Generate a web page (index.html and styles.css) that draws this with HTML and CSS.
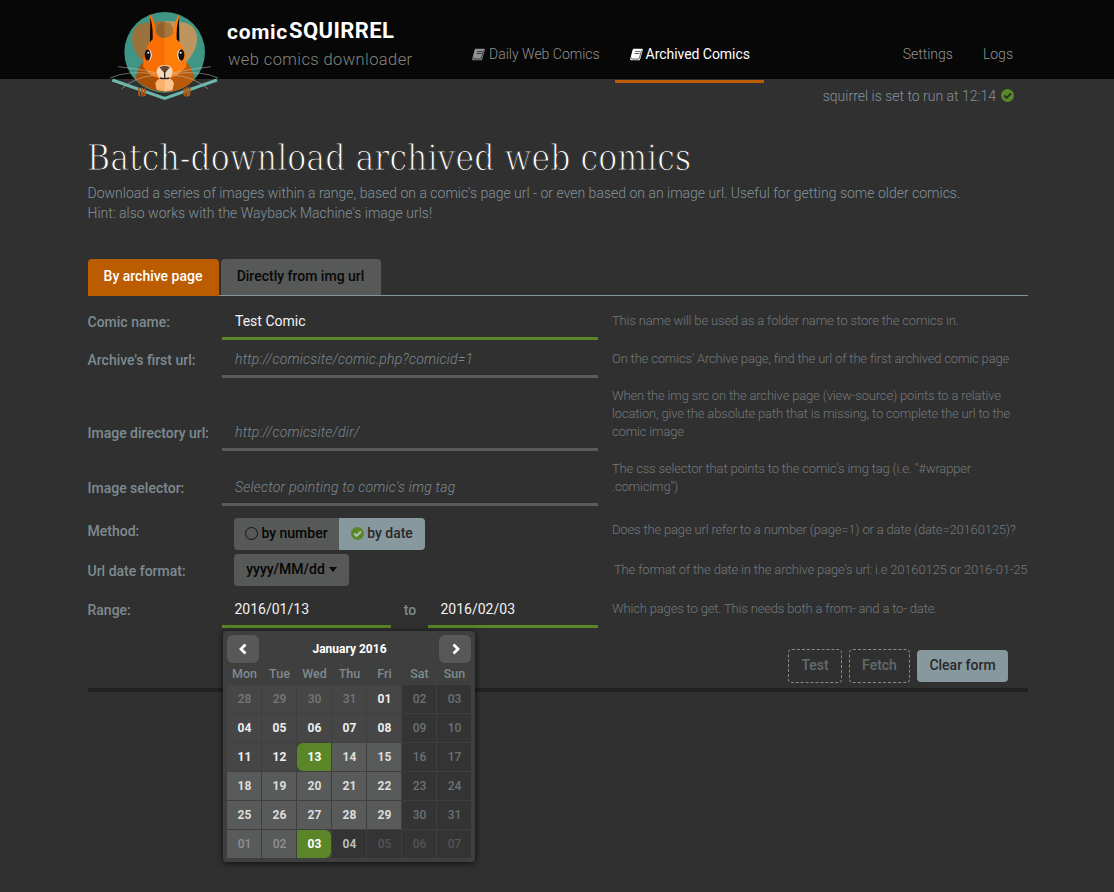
FILE: index.html
```html
<!DOCTYPE html>
<html lang="en">
<head>
<meta charset="utf-8">
<title>comicSQUIRREL</title>
<link rel="stylesheet" href="styles.css">
</head>
<body>
<svg class="defs" width="0" height="0">
  <defs>
    <symbol id="book" viewBox="0 0 40 38">
      <path fill="currentColor" d="M12 1h24c3 0 4 2 3 5l-7 25c-1 4-3 6-6 6H5c-4 0-5-3-4-6L8 5c1-3 2-4 4-4z"/>
      <path class="cut" d="M16 10h15M14 16h15M5 29c-1 3 0 4 3 4h17c2 0 3-1 4-3l6-23"/>
    </symbol>
    <symbol id="check" viewBox="0 0 12 12">
      <circle cx="6" cy="6" r="6" fill="#5b8827"/>
      <path d="M3 6l2.2 2.2L9.2 4.2" fill="none" stroke="currentColor" stroke-width="1.9"/>
    </symbol>
  </defs>
</svg>
<header class="header">
  <svg class="logo" viewBox="0 0 390 330">
    <circle cx="194" cy="157" r="121" fill="#3f9684"/>
    <path d="M194 64c-45-1-80 4-90 22-18 30-3 75 31 105l59 10z" fill="#9b713c"/>
    <path d="M194 64c45-1 78 4 88 22 20 30 5 75-28 105l-60 10z" fill="#bd965f"/>
    <path d="M107 238c5-25 10-42 24-52h126c15 12 21 30 26 52-42 50-130 50-176 0z" fill="#aa4f04"/>
    <path d="M194 186h63c15 12 21 30 26 52-22 25-52 36-89 38z" fill="#b95a0a"/>
    <path d="M151 43c9 13 14 32 17 56q26 30 52 0c3-24 8-43 17-56l1 84c15 18 22 43 21 73l-27 26-38 15-41-15-22-24c-2-27 4-53 19-75z" fill="#ff7d0a"/>
    <path d="M194 114q-15 0-26-15c-3-24-8-43-17-56l-1 84c-15 22-21 48-19 75l22 24 41 15z" fill="#fa6f05"/>
    <path d="M151 52c6 22 8 44 7 66l-8 8zM237 52c-6 22-8 44-7 66l8 8z" fill="#080808"/>
    <path d="M168 99c0-18 5-26 13-30l13-4v49q-16 0-26-15z" fill="#91622b"/>
    <path d="M220 99c0-18-5-26-13-30l-13-4v49q16 0 26-15z" fill="#a97538"/>
    <path d="M166 252c2-25 54-25 55 0l-4 18q-23 7-47 0z" fill="#fbb06d"/>
    <path d="M194 233q27 1 27 19l-4 18-23 5z" fill="#ffc38b"/>
    <ellipse cx="145" cy="165" rx="10" ry="17" fill="#fff"/><ellipse cx="143" cy="165" rx="9" ry="17" fill="#111"/>
    <ellipse cx="242" cy="165" rx="10" ry="17" fill="#fff"/><ellipse cx="244" cy="165" rx="9" ry="17" fill="#111"/>
    <circle cx="145" cy="158" r="3" fill="#fff"/><circle cx="242" cy="158" r="3" fill="#fff"/>
    <path d="M194 195c18 0 24 9 24 21 0 13-10 23-24 23s-24-10-24-23c0-12 7-21 24-21z" fill="#f5d9bd"/>
    <path d="M178 202q16-9 32 0l-13 15h-6z" fill="#69472c"/>
    <path d="M194 214v22M180 234q14 4 28 0" stroke="#29211b" stroke-width="4" fill="none"/>
    <g fill="none" stroke="#c8c8c0" stroke-width="2" opacity=".75">
      <path d="M168 218Q105 205 54 200M166 221Q80 211 30 234M169 225Q105 230 64 267M220 218Q275 206 333 200M221 221Q305 211 355 234M219 225Q279 229 325 267"/>
    </g>
    <path d="M37 240l157 55 157-55" fill="none" stroke="#6eb8ab" stroke-width="9"/>
    <path d="M117 263l1 25M126 263l1 27M135 266l-1 22M253 265l1 24M261 262l1 28M270 262l-3 26" stroke="#ae5a18" stroke-width="6" fill="none"/>
  </svg>
  <div class="brand">
    <div class="name"><span class="comic">comic</span><span class="squirrel">SQUIRREL</span></div>
    <div class="tagline">web comics downloader</div>
  </div>
  <nav class="nav">
    <a class="tab"><svg class="book"><use href="#book"/></svg><span>Daily Web Comics</span></a>
    <a class="tab current"><svg class="book"><use href="#book"/></svg><span>Archived Comics</span></a>
  </nav>
  <nav class="side"><a>Settings</a><a>Logs</a></nav>
</header>
<main class="main">
  <div class="status"><span>squirrel is set to run at 12:14</span><svg class="check"><use href="#check"/></svg></div>
  <h1 class="title"><span>Batch-download archived web comics</span></h1>
  <p class="intro">Download a series of images within a range, based on a comic's page url - or even based on an image url. Useful for getting some older comics.<br>Hint: also works with the Wayback Machine's image urls!</p>
  <div class="tabs"><a class="on">By archive page</a><a>Directly from img url</a></div>
  <form class="form">
    <div class="row r1"><label>Comic name:</label><div class="input filled">Test Comic</div><p>This name will be used as a folder name to store the comics in.</p></div>
    <div class="row r2"><label>Archive's first url:</label><div class="input">http://comicsite/comic.php?comicid=1</div><p>On the comics' Archive page, find the url of the first archived comic page</p></div>
    <div class="row r3"><label>Image directory url:</label><div class="input">http://comicsite/dir/</div><p>When the img src on the archive page (view-source) points to a relative<br>location, give the absolute path that is missing, to complete the url to the<br>comic image</p></div>
    <div class="row r4"><label>Image selector:</label><div class="input">Selector pointing to comic's img tag</div><p>The css selector that points to the comic's img tag (i.e. "#wrapper<br>.comicimg")</p></div>
    <div class="row r5"><label>Method:</label><div class="choice"><span class="btn left"><i class="ring"></i>by number</span><span class="btn light right"><svg class="check"><use href="#check"/></svg>by date</span></div><p>Does the page url refer to a number (page=1) or a date (date=20160125)?</p></div>
    <div class="row r6"><label>Url date format:</label><div class="choice"><span class="btn">yyyy/MM/dd<i class="caret"></i></span></div><p>The format of the date in the archive page's url: i.e 20160125 or 2016-01-25</p></div>
    <div class="row r7"><label>Range:</label>
      <div class="range"><div class="input filled">2016/01/13</div><span class="to">to</span><div class="input filled">2016/02/03</div>
        <div class="cal">
          <div class="calhead"><span class="arrow"><svg viewBox="0 0 10 12"><path d="M7.500 1.500L3 6l4.500 4.500"/></svg></span><b>January 2016</b><span class="arrow"><svg viewBox="0 0 10 12"><path d="M3.500 1.500L8 6l-4.500 4.500"/></svg></span></div>
          <div class="days names"><span>Mon</span><span>Tue</span><span>Wed</span><span>Thu</span><span>Fri</span><span>Sat</span><span>Sun</span></div>
          <div class="days cells">
            <i class="out">28</i><i class="out">29</i><i class="out">30</i><i class="out">31</i><i>01</i><i class="off">02</i><i class="off">03</i>
            <i>04</i><i>05</i><i>06</i><i>07</i><i>08</i><i class="off">09</i><i class="off">10</i>
            <i>11</i><i>12</i><i class="sel start">13</i><i class="in">14</i><i class="in">15</i><i class="off">16</i><i class="off">17</i>
            <i class="in">18</i><i class="in">19</i><i class="in">20</i><i class="in">21</i><i class="in">22</i><i class="off">23</i><i class="off">24</i>
            <i class="in">25</i><i class="in">26</i><i class="in">27</i><i class="in">28</i><i class="in">29</i><i class="off">30</i><i class="off">31</i>
            <i class="in faded">01</i><i class="in faded">02</i><i class="sel end">03</i><i class="next">04</i><i class="off dim">05</i><i class="off dim">06</i><i class="off dim">07</i>
          </div>
        </div>
      </div>
      <p>Which pages to get. This needs both a from- and a to- date.</p></div>
    <div class="actions"><span class="ghost test">Test</span><span class="ghost fetch">Fetch</span><span class="btn light clear">Clear form</span></div>
  </form>
</main>
</body>
</html>
```
FILE: styles.css
```css
* { box-sizing: border-box; }
body { margin: 0; height: 892px; overflow: hidden; background: #303030; color: #83939a; font: 300 14px/20px Roboto, sans-serif; white-space: nowrap; }
p, h1 { margin: 0; }
.defs { position: absolute; }
.header { display: flex; height: 79px; background: #070707; padding-left: 100px; }
.logo { width: 130px; height: 110px; flex: none; position: relative; z-index: 1; }
.brand { width: 357px; padding: 18px 0 0 127px; margin-left: -130px; flex: none; }
.name { display: flex; color: #fff; font: 700 22px/26px Roboto, sans-serif; height: 30px; }
.comic { width: 62px; padding-top: 1px; font-size: 21px; letter-spacing: .7px; }
.squirrel { letter-spacing: .4px; }
.tagline { color: #85857f; font: 300 16.5px/24px Roboto, sans-serif; letter-spacing: .4px; padding-left: 1px; }
.nav { display: flex; height: 83px; }
.tab { display: flex; gap: 4px; padding: 44px 15px 0; color: #929292; height: 83px; }
.current { color: #fff; font-weight: 400; border-bottom: 3px solid #bb5c00; gap: 3px; padding-right: 14px; }
.current span { letter-spacing: -.05px; }
.book { width: 13px; height: 13px; margin-top: 4px; }
.cut { fill: none; stroke: #070707; stroke-width: 2; }
.side { display: flex; gap: 30px; margin-left: auto; padding: 44px 101px 0 0; color: #929292; }
.main { width: 940px; margin-left: 88px; }
.check { width: 13px; height: 13px; flex: none; color: #303030; }
.status { display: flex; justify-content: flex-end; gap: 5px; padding: 7px 14px 0 0; height: 27px; }
.status .check { margin-top: 3px; }
.title { height: 44px; margin-top: 31px; font: 100 35px/43px "Roboto Slab", "DejaVu Serif Condensed", "DejaVu Serif", serif; color: #fff; -webkit-text-stroke: 1px #303030; letter-spacing: .07px; text-indent: -1px; }
.intro { margin: 2px 0 0 -.5px; height: 40px; }
.tabs { display: flex; gap: 2px; height: 37px; margin-top: 36px; border-bottom: 1px solid #83939a; }
.tabs a { width: 160px; height: 36px; border-radius: 4px 4px 0 0; background: #575958; color: #080808; font-weight: 500; line-height: 35px; text-align: center; padding-right: 1px; }
.tabs .on { width: 131px; height: 37px; background: #bb5c00; color: #fff; }
.form { height: 396px; border-bottom: 4px solid #212121; }
.row { display: grid; grid-template-columns: 134px 376px 430px; align-items: end; }
.row label { font-weight: 500; margin: 0 0 8px -.5px; color: #7d8b90; }
.row p { align-self: start; font-size: 13px; line-height: 18px; letter-spacing: -.165px; padding: 9px 0 0 14px; color: #73797b; }
.input { height: 32px; border-bottom: 3px solid #5a5c5c; padding-left: 13px; line-height: 26px; font-style: italic; letter-spacing: .22px; color: #7d898e; }
.filled { font-style: normal; font-weight: 400; letter-spacing: 0; color: #f2f2f2; border-color: #5b8627; }
.r1 { height: 44px; } .r1 p { padding-top: 16px; }
.r2 { height: 38px; } .r2 p { padding-top: 10px; }
.r3 { height: 73px; }
.r4 { height: 55px; }
.r5, .r6 { height: 32px; }
.r5 { margin-top: 12px; } .r5 label { margin-bottom: 9px; } .r5 p { padding-top: 3px; }
.r6 { margin-top: 4px; } .r6 label { margin-bottom: 5px; } .r6 p { padding: 7px 0 0 16px; }
.r7 { height: 42px; } .r7 p { padding-top: 14px; }
.choice { display: flex; padding-left: 12px; }
.btn { display: flex; align-items: center; justify-content: center; height: 32px; width: 115px; border-radius: 4px; background: #575958; color: #050505; font-weight: 500; padding-bottom: 2px; }
.left { width: 105px; border-radius: 4px 0 0 4px; gap: 3px; }
.right { width: 86px; border-radius: 0 4px 4px 0; gap: 3px; }
.light { background: #87989f; color: #282828; }
.light .check { color: #b5c1c6; }
.ring { width: 13px; height: 13px; border: 1px solid #111; border-radius: 50%; }
.caret { border: 4.5px solid transparent; border-top-color: #080808; border-top-width: 5px; border-bottom: 0; margin-left: 4px; }
.range { display: flex; position: relative; }
.range .input { width: 170px; padding-left: 12.500px; }
.range .input:first-child { width: 169px; }
.to { width: 37px; text-align: center; font-weight: 500; padding: 4px 0 0 1px; color: #7d8b90; }
.actions { display: flex; gap: 7px; justify-content: flex-end; align-items: center; padding: 21px 20px 0 0; }
.ghost { height: 34px; border: 1px dashed #858b8c; border-radius: 4px; line-height: 30px; text-align: center; font-weight: 500; color: #626c6e; }
.test { width: 54px; } .fetch { width: 61px; } .clear { width: 91px; }
.cal { position: absolute; z-index: 2; left: 1px; top: 35px; width: 252px; height: 231px; padding: 4px 3px 0 4px; background: #3f3f3f; border-radius: 4px; box-shadow: 0 1px 6px rgba(0,0,0,.75); font-size: 12px; }
.calhead { display: flex; justify-content: space-between; height: 28px; color: #fff; line-height: 28px; padding-right: 1px; }
.calhead b { font-weight: 700; padding-left: 1px; }
.arrow { display: flex; align-items: center; justify-content: center; width: 32px; height: 28px; background: #575958; border-radius: 6px; }
.arrow svg { width: 10px; height: 12px; fill: none; stroke: #fff; stroke-width: 2.8; }
.days { display: grid; grid-template-columns: repeat(7, 34px); gap: 1px; text-align: center; }
.names { height: 22px; line-height: 21px; font-weight: 500; color: #7d8b90; font-size: 12.500px; padding-left: .5px; }
.cells { line-height: 28px; }
.cells i { height: 28px; background: #464646; color: #eee; font-style: normal; font-weight: 700; padding-left: 1px; }
.cells .out { color: #777; font-weight: 500; }
.cells .off { background: #343434; color: #6b7274; font-weight: 500; }
.cells .in { background: #595b5b; color: #ddd; }
.cells .faded { color: #929292; font-weight: 500; }
.cells .sel { background: #5b8627; color: #fff; }
.cells .start { border-radius: 6px 0 0 6px; }
.cells .end { border-radius: 0 6px 6px 0; }
.cells .next { background: #343434; color: #bbb; }
.cells .dim { color: #555; }
```
